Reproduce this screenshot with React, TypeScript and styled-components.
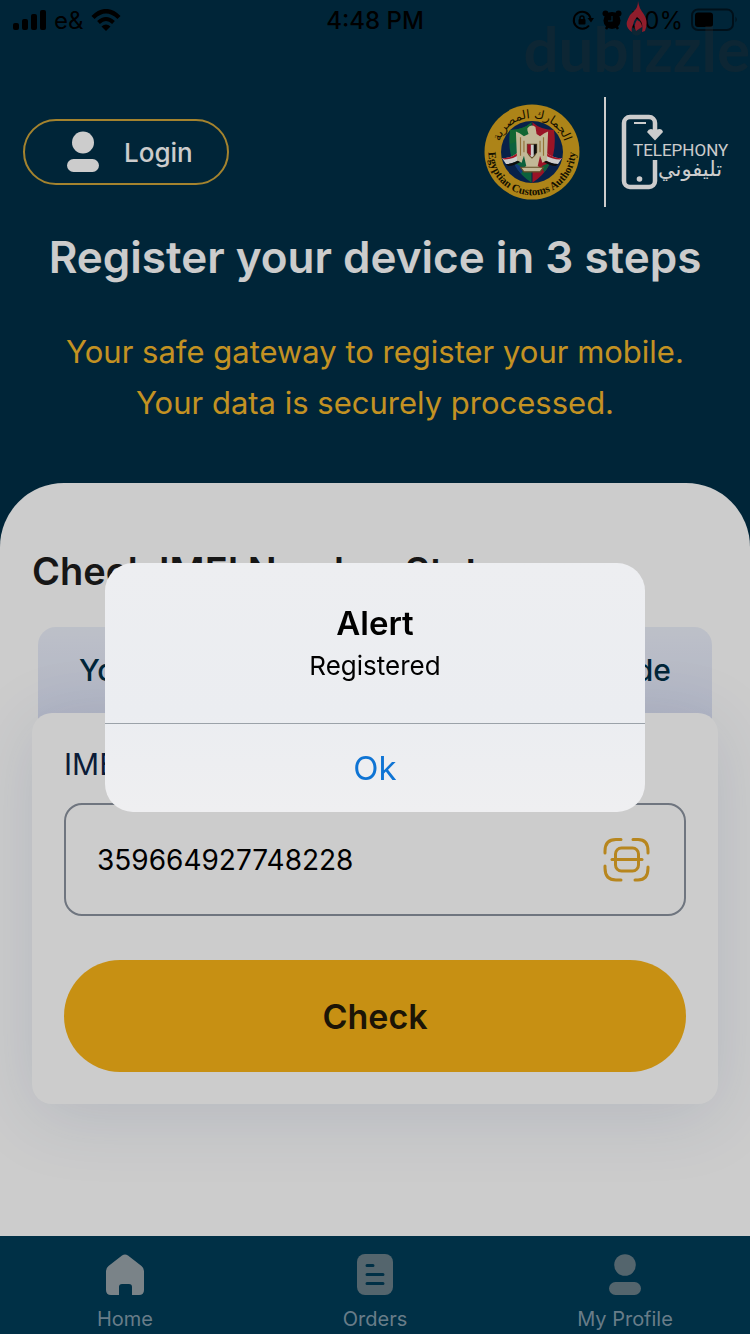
import { useState } from "react";
import styled, { createGlobalStyle } from "styled-components";

const GlobalStyle = createGlobalStyle`
  * {
    box-sizing: border-box;
  }

  body {
    margin: 0;
    font-family: "Inter", "Liberation Sans", sans-serif;
    background: #002f47;
  }

  button {
    font-family: inherit;
    border: none;
    cursor: pointer;
  }

  svg {
    display: block;
    flex-shrink: 0;
  }
`;

const Page = styled.div`
  min-height: 100vh;
  display: flex;
  flex-direction: column;
  background: #002f47;
`;

const StatusBar = styled.div`
  display: grid;
  grid-template-columns: 1fr auto 1fr;
  align-items: center;
  height: 40px;
  padding: 0 12px;
  font-size: 24px;
  color: #000;
`;

const StatusGroup = styled.div<{ $end?: boolean }>`
  display: flex;
  align-items: center;
  justify-content: ${(p) => (p.$end ? "flex-end" : "flex-start")};
  gap: 8px;
`;

const Time = styled.span`
  font-weight: 500;
`;

const Header = styled.header`
  padding: 57px 23px 55px;
`;

const TopRow = styled.div`
  display: flex;
  align-items: center;
  justify-content: space-between;
`;

const LoginButton = styled.button`
  display: flex;
  align-items: center;
  gap: 24px;
  height: 66px;
  padding: 0 34px 0 41px;
  border: 2px solid #cda43a;
  border-radius: 33px;
  background: transparent;
  color: #fff;
  font-size: 26px;
  font-weight: 500;
`;

const Logos = styled.div`
  display: flex;
  align-items: center;
  gap: 16px;
`;

const Divider = styled.div`
  width: 2px;
  height: 110px;
  margin-left: 8px;
  background: #fff;
`;

const Heading = styled.h1`
  margin: 25px 0 44px;
  font-size: 44px;
  line-height: 50px;
  font-weight: 600;
  text-align: center;
  color: #fff;
`;

const Tagline = styled.p`
  margin: 0;
  font-size: 31px;
  line-height: 51px;
  text-align: center;
  color: #f4b72b;
`;

const Sheet = styled.main`
  flex: 1;
  padding: 64px 32px 80px;
  border-radius: 64px 64px 0 0;
  background: #fff;
`;

const SheetTitle = styled.h2`
  margin: 0 0 32px;
  font-size: 38px;
  line-height: 48px;
  font-weight: 600;
  color: #1c1c1c;
`;

const CodeTab = styled.div`
  display: flex;
  justify-content: space-between;
  height: 106px;
  margin: 0 6px -20px;
  padding: 24px 41px;
  border-radius: 18px 18px 0 0;
  background: linear-gradient(#ecf0fb, #dce1f4);
  font-size: 30px;
  line-height: 38px;
  font-weight: 500;
  color: #002f47;
`;

const Card = styled.form`
  display: flex;
  flex-direction: column;
  padding: 32px;
  border-radius: 20px;
  background: #fff;
  box-shadow: 0 12px 72px rgba(30, 60, 130, 0.13);
`;

const Label = styled.label`
  margin-bottom: 20px;
  font-size: 30px;
  line-height: 38px;
  color: #0d2345;
`;

const Field = styled.div`
  display: flex;
  align-items: center;
  height: 113px;
  margin-bottom: 44px;
  padding: 0 34px 0 31px;
  border: 2px solid #8b939f;
  border-radius: 18px;
`;

const ImeiInput = styled.input`
  flex: 1;
  min-width: 0;
  padding: 0;
  border: none;
  outline: none;
  background: transparent;
  font-family: inherit;
  font-size: 28px;
  color: #000;
`;

const IconButton = styled.button`
  padding: 0;
  background: none;
`;

const CheckButton = styled.button`
  height: 112px;
  border-radius: 56px;
  background: #f9b518;
  font-size: 34px;
  font-weight: 600;
  color: #241a08;
`;

const TabBar = styled.nav`
  display: grid;
  grid-template-columns: repeat(3, 1fr);
  height: 98px;
  background: #003c58;
`;

const TabLink = styled.a<{ $active?: boolean }>`
  display: flex;
  flex-direction: column;
  align-items: center;
  gap: 10px;
  padding-top: 18px;
  font-size: 20px;
  line-height: 26px;
  text-decoration: none;
  color: #839cab;

  svg {
    color: ${(p) => (p.$active ? "#99a4aa" : "#6a7f89")};
  }
`;

const Overlay = styled.div`
  position: fixed;
  inset: 0;
  display: flex;
  align-items: center;
  justify-content: center;
  padding-top: 40px;
  background: rgba(0, 0, 0, 0.2);
`;

const AlertBox = styled.div`
  width: 72%;
  border-radius: 28px;
  overflow: hidden;
  background: linear-gradient(#edeef1, #ebedf1 60%, #efeff1);
  text-align: center;
  color: #000;
`;

const AlertBody = styled.div`
  padding: 38px 32px 36px;
`;

const AlertTitle = styled.h3`
  margin: 0;
  font-size: 33px;
  line-height: 44px;
  font-weight: 600;
`;

const AlertText = styled.p`
  margin: 0;
  font-size: 26px;
  line-height: 42px;
`;

const AlertButton = styled.button`
  width: 100%;
  height: 89px;
  border-top: 1px solid #9ba2a9;
  background: transparent;
  font-size: 33px;
  color: #0f74d4;
`;

const Watermark = styled.div`
  position: absolute;
  top: 14px;
  right: 0;
  font-family: "Lato", sans-serif;
  font-size: 62px;
  font-weight: 700;
  line-height: 68px;
  color: rgba(44, 44, 44, 0.3);
  pointer-events: none;

  svg {
    position: absolute;
    top: -14px;
    right: 101px;
  }
`;

const SignalIcon = () => (
  <svg width="34" height="22" viewBox="0 0 34 22">
    <rect x="1" y="14" width="6" height="7" rx="2" />
    <rect x="10" y="10" width="6" height="11" rx="2" />
    <rect x="19" y="5" width="6" height="16" rx="2" />
    <rect x="28" y="1" width="6" height="20" rx="2" />
  </svg>
);

const WifiIcon = () => (
  <svg width="30" height="22" viewBox="0 0 30 22" fill="none" stroke="#000">
    <path d="M2 8.500Q15 -4 28 8.500" strokeWidth="4.500" />
    <path d="M7.500 13.500Q15 6.500 22.500 13.500" strokeWidth="4" />
    <path d="M10.500 17.500Q15 13.500 19.500 17.500L15 22Z" fill="#000" stroke="none" />
  </svg>
);

const LockIcon = () => (
  <svg width="22" height="22" viewBox="0 0 22 22" fill="none" stroke="#000" strokeWidth="2">
    <path d="M17 16.500A8.500 8.500 0 1 1 18.500 9" />
    <path d="M15.500 9h6.500l-3 4.500z" fill="#000" stroke="none" />
    <rect x="6.500" y="10" width="7" height="5.500" rx="1" fill="#000" stroke="none" />
    <path d="M8 10.500V9a2 2 0 0 1 4 0v1.500" strokeWidth="1.500" />
  </svg>
);

const AlarmIcon = () => (
  <svg width="20" height="22" viewBox="0 0 20 22">
    <circle cx="10" cy="11.500" r="8.500" />
    <circle cx="3.500" cy="4.500" r="3" />
    <circle cx="16.500" cy="4.500" r="3" />
    <path d="M4 20l2-3M16 20l-2-3" stroke="#000" strokeWidth="2.500" />
    <path d="M10 7v5H6" fill="none" stroke="#002f47" strokeWidth="1.200" />
  </svg>
);

const BatteryIcon = () => (
  <svg width="47" height="24" viewBox="0 0 47 24">
    <rect x="1" y="1.500" width="41" height="20.500" rx="6" fill="none" stroke="#001521" strokeWidth="2" />
    <rect x="4" y="4.500" width="18" height="14.500" rx="3" />
    <path d="M44.500 8.500q2.500 3 0 6z" fill="#001521" />
  </svg>
);

const LoginIcon = () => (
  <svg width="34" height="42" viewBox="0 0 34 42" fill="#fff">
    <circle cx="17" cy="11.500" r="11" />
    <rect x="1" y="28" width="32" height="13" rx="6.500" />
  </svg>
);

const SealLogo = () => (
  <svg width="96" height="96" viewBox="0 0 96 96" role="img" aria-label="Egyptian Customs Authority">
    <defs>
      <path id="seal-top" d="M14 48A34 34 0 0 1 82 48" />
      <path id="seal-bottom" d="M5.200 40A43.500 43.500 0 1 0 90.800 40" />
      <clipPath id="seal-shield">
        <path d="M48 18Q57 26 70 26Q75 62 48 79Q21 62 26 26Q39 26 48 18Z" />
      </clipPath>
    </defs>
    <circle cx="48" cy="48" r="47.500" fill="#d9a51f" />
    <circle cx="48" cy="48" r="31" fill="#0b2a5c" />
    <g clipPath="url(#seal-shield)">
      <rect x="20" y="16" width="28" height="64" fill="#0f7a4d" />
      <rect x="48" y="16" width="28" height="64" fill="#c01a30" />
      <path d="M48 18V32L26 40V26Z" fill="#17803f" />
      <path d="M24 56L40 64L34 76Z" fill="#17479a" />
      <path d="M72 56L58 62L62 74Z" fill="#0f7a4d" />
      <path d="M48 18V80" stroke="#0b2a5c" strokeWidth="1" />
    </g>
    <path d="M18 54q8 1 17-6l3 6q-8 6-16 6z" fill="#fff" />
    <path d="M18 54q8 1 17-6l1 2.500q-8 5-16 5z" fill="#d0192f" />
    <path d="M22 60q8 0 16-6l1 2q-8 6-15 6z" fill="#111" />
    <path d="M78 54q-8 1-17-6l-3 6q8 6 16 6z" fill="#fff" />
    <path d="M78 54q-8 1-17-6l-1 2.500q8 5 16 5z" fill="#d0192f" />
    <path d="M74 60q-8 0-16-6l-1 2q8 6 15 6z" fill="#111" />
    <g transform="translate(48 46) scale(1.150) translate(-48 -46)">
      <path
        d="M44 27q3-4 7-1l1 6 3 2q4-3 7-4l-1 25-4 2-2-6-2 9 3 2v2H40v-2l3-2-2-9-2 6-4-2-1-25q3 1 7 4l4-2-1-3z"
        fill="#f3e6bd"
      />
      <path d="M38 35v16M41 38v10M55 38v10M58 35v16" stroke="#b88f45" strokeWidth="1" />
      <path d="M44 41h8v7q-2 4-4 5q-2-1-4-5z" fill="#fff" stroke="#7a602e" strokeWidth="1" />
      <path d="M44 41h3v10q-2-1-3-3z" fill="#c01a30" />
      <path d="M49.500 41H52v7l-2.500 3z" fill="#111" />
      <path d="M38 61h20l-3 4H41z" fill="#f3e6bd" stroke="#7a602e" strokeWidth="1" />
    </g>
    <text fontFamily="DejaVu Sans, sans-serif" fontSize="12" fill="#1a1400" textAnchor="middle">
      <textPath href="#seal-top" startOffset="50%">
        الجمارك المصرية
      </textPath>
    </text>
    <text fontFamily="Liberation Serif, serif" fontWeight="700" fontSize="11" fill="#1a1400" textAnchor="middle">
      <textPath href="#seal-bottom" startOffset="50%">
        Egyptian Customs Authority
      </textPath>
    </text>
  </svg>
);

const TelephonyLogo = () => (
  <svg width="105" height="76" viewBox="0 0 105 76" overflow="visible" role="img" aria-label="Telephony">
    <g fill="none" stroke="#fff" strokeWidth="4.500">
      <path d="M33 16V9a6 6 0 0 0-6-6H8a6 6 0 0 0-6 6V67a6 6 0 0 0 6 6H27a6 6 0 0 0 6-6V46" />
      <path d="M12 9h12" strokeWidth="2" />
    </g>
    <circle cx="17.500" cy="65" r="2.800" fill="#fff" />
    <path d="M25 18q2-4 6-2.500h4q5-1.500 6 2.500L33 26.500z" fill="#fff" />
    <text x="11" y="42" fontFamily="Roboto, sans-serif" fontSize="17" fill="#fff">
      TELEPHONY
    </text>
    <text x="100" y="62" fontFamily="DejaVu Sans, sans-serif" fontSize="21" fill="#fff" direction="rtl">
      تليفوني
    </text>
  </svg>
);

const ScanIcon = () => (
  <svg width="47" height="46" viewBox="0 0 47 46" fill="none" stroke="#e5a826" strokeWidth="3" strokeLinecap="round">
    <path d="M2 16v-2Q2 2.500 13 2.500H18" />
    <path d="M30 2.500h5Q45 2.500 45 14v2" />
    <path d="M2 29v2Q2 43 13 43H18" />
    <path d="M32 43h3Q45 43 45 31v-1" />
    <rect x="12.500" y="11" width="23" height="23" rx="6" />
    <path d="M9 22.500h30" />
  </svg>
);

const HomeIcon = () => (
  <svg width="40" height="42" viewBox="0 0 40 42" fill="currentColor">
    <path d="M17 1.500Q20 -.500 23 1.500L36.500 12Q39 14 39 17V36Q39 41 34 41H27V33Q27 30 24 30H17Q14 30 14 33V41H6Q1 41 1 36V17Q1 14 3.500 12Z" />
  </svg>
);

const OrdersIcon = () => (
  <svg width="38" height="42" viewBox="0 0 38 42">
    <rect x="1" y="0" width="36" height="41" rx="8" fill="currentColor" />
    <path d="M11 11.500h6M11 20.500h16M11 29.500h16" stroke="#003c58" strokeWidth="3" strokeLinecap="round" />
  </svg>
);

const ProfileIcon = () => (
  <svg width="34" height="42" viewBox="0 0 34 42" fill="currentColor">
    <circle cx="17" cy="11" r="10.800" />
    <rect x="1" y="28" width="32" height="13" rx="6.500" />
  </svg>
);

const FlameIcon = () => (
  <svg width="24" height="34" viewBox="0 0 24 34">
    <path
      d="M13 1Q14 8 18 13Q24 21 20 31L17 32Q19 22 12 17Q9 20 8 25Q6 29 7 32Q-1 27 3 19Q5 14 9 11Q13 8 13 1Z"
      fill="#8f1d2c"
    />
    <path d="M12 20Q17 22 17 27L11 31Q8 26 12 20Z" fill="#8f1d2c" />
  </svg>
);

const App = () => {
  const [imei, setImei] = useState("359664927748228");
  const [showAlert, setShowAlert] = useState(true);

  return (
    <>
      <GlobalStyle />
      <Page>
        <StatusBar>
          <StatusGroup>
            <SignalIcon />
            <span>e&amp;</span>
            <WifiIcon />
          </StatusGroup>
          <Time>4:48 PM</Time>
          <StatusGroup $end>
            <LockIcon />
            <AlarmIcon />
            <span>50%</span>
            <BatteryIcon />
          </StatusGroup>
        </StatusBar>

        <Header>
          <TopRow>
            <LoginButton type="button">
              <LoginIcon />
              Login
            </LoginButton>
            <Logos>
              <SealLogo />
              <Divider />
              <TelephonyLogo />
            </Logos>
          </TopRow>
          <Heading>Register your device in 3 steps</Heading>
          <Tagline>
            Your safe gateway to register your mobile.
            <br />
            Your data is securely processed.
          </Tagline>
        </Header>

        <Sheet>
          <SheetTitle>Check IMEI Number Status</SheetTitle>
          <CodeTab>
            <span>Your</span>
            <span>code</span>
          </CodeTab>
          <Card
            onSubmit={(e) => {
              e.preventDefault();
              setShowAlert(true);
            }}
          >
            <Label htmlFor="imei">IMEI</Label>
            <Field>
              <ImeiInput id="imei" value={imei} onChange={(e) => setImei(e.target.value)} />
              <IconButton type="button" aria-label="Scan">
                <ScanIcon />
              </IconButton>
            </Field>
            <CheckButton type="submit">Check</CheckButton>
          </Card>
        </Sheet>

        <TabBar>
          <TabLink href="#home" $active>
            <HomeIcon />
            Home
          </TabLink>
          <TabLink href="#orders">
            <OrdersIcon />
            Orders
          </TabLink>
          <TabLink href="#profile">
            <ProfileIcon />
            My Profile
          </TabLink>
        </TabBar>
      </Page>

      {showAlert && (
        <Overlay>
          <AlertBox role="alertdialog" aria-labelledby="alert-title" aria-describedby="alert-text">
            <AlertBody>
              <AlertTitle id="alert-title">Alert</AlertTitle>
              <AlertText id="alert-text">Registered</AlertText>
            </AlertBody>
            <AlertButton type="button" onClick={() => setShowAlert(false)}>
              Ok
            </AlertButton>
          </AlertBox>
        </Overlay>
      )}

      <Watermark>
        dubizzle
        <FlameIcon />
      </Watermark>
    </>
  );
};

export default App;
